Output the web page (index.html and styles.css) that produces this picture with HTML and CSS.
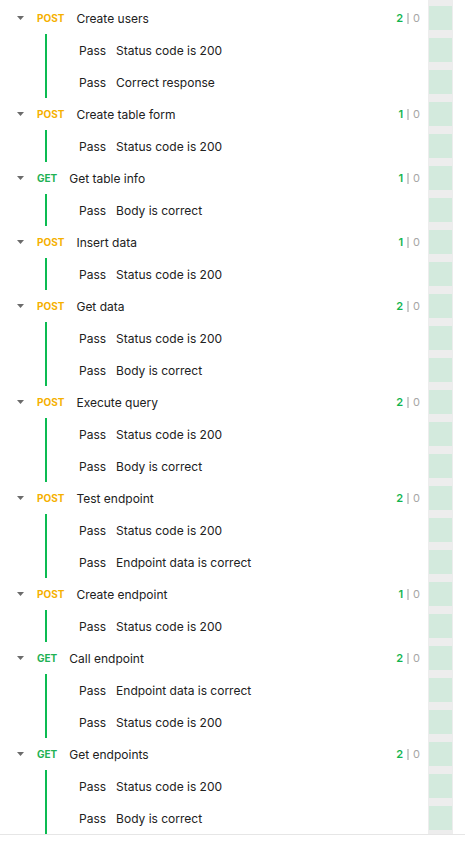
FILE: index.html
```html
<!DOCTYPE html>
<html>
<head>
<meta charset="utf-8">
<link rel="stylesheet" href="styles.css">
</head>
<body>
<div class="wrap">
  <div class="list">
    <div class="group">
      <div class="head"><svg class="caret" width="7" height="4" viewBox="0 0 7 4"><path d="M0 0H7L3.5 4Z"/></svg><span class="m post">POST</span><span class="name">Create users</span><span class="cnt"><b>2</b><i></i><s>0</s></span></div>
      <div class="kids">
        <div class="t"><span class="p">Pass</span><span>Status code is 200</span></div>
        <div class="t"><span class="p">Pass</span><span>Correct response</span></div>
      </div>
    </div>
    <div class="group">
      <div class="head"><svg class="caret" width="7" height="4" viewBox="0 0 7 4"><path d="M0 0H7L3.5 4Z"/></svg><span class="m post">POST</span><span class="name">Create table form</span><span class="cnt"><b>1</b><i></i><s>0</s></span></div>
      <div class="kids">
        <div class="t"><span class="p">Pass</span><span>Status code is 200</span></div>
      </div>
    </div>
    <div class="group">
      <div class="head"><svg class="caret" width="7" height="4" viewBox="0 0 7 4"><path d="M0 0H7L3.5 4Z"/></svg><span class="m get">GET</span><span class="name">Get table info</span><span class="cnt"><b>1</b><i></i><s>0</s></span></div>
      <div class="kids">
        <div class="t"><span class="p">Pass</span><span>Body is correct</span></div>
      </div>
    </div>
    <div class="group">
      <div class="head"><svg class="caret" width="7" height="4" viewBox="0 0 7 4"><path d="M0 0H7L3.5 4Z"/></svg><span class="m post">POST</span><span class="name">Insert data</span><span class="cnt"><b>1</b><i></i><s>0</s></span></div>
      <div class="kids">
        <div class="t"><span class="p">Pass</span><span>Status code is 200</span></div>
      </div>
    </div>
    <div class="group">
      <div class="head"><svg class="caret" width="7" height="4" viewBox="0 0 7 4"><path d="M0 0H7L3.5 4Z"/></svg><span class="m post">POST</span><span class="name">Get data</span><span class="cnt"><b>2</b><i></i><s>0</s></span></div>
      <div class="kids">
        <div class="t"><span class="p">Pass</span><span>Status code is 200</span></div>
        <div class="t"><span class="p">Pass</span><span>Body is correct</span></div>
      </div>
    </div>
    <div class="group">
      <div class="head"><svg class="caret" width="7" height="4" viewBox="0 0 7 4"><path d="M0 0H7L3.5 4Z"/></svg><span class="m post">POST</span><span class="name">Execute query</span><span class="cnt"><b>2</b><i></i><s>0</s></span></div>
      <div class="kids">
        <div class="t"><span class="p">Pass</span><span>Status code is 200</span></div>
        <div class="t"><span class="p">Pass</span><span>Body is correct</span></div>
      </div>
    </div>
    <div class="group">
      <div class="head"><svg class="caret" width="7" height="4" viewBox="0 0 7 4"><path d="M0 0H7L3.5 4Z"/></svg><span class="m post">POST</span><span class="name">Test endpoint</span><span class="cnt"><b>2</b><i></i><s>0</s></span></div>
      <div class="kids">
        <div class="t"><span class="p">Pass</span><span>Status code is 200</span></div>
        <div class="t"><span class="p">Pass</span><span>Endpoint data is correct</span></div>
      </div>
    </div>
    <div class="group">
      <div class="head"><svg class="caret" width="7" height="4" viewBox="0 0 7 4"><path d="M0 0H7L3.5 4Z"/></svg><span class="m post">POST</span><span class="name">Create endpoint</span><span class="cnt"><b>1</b><i></i><s>0</s></span></div>
      <div class="kids">
        <div class="t"><span class="p">Pass</span><span>Status code is 200</span></div>
      </div>
    </div>
    <div class="group">
      <div class="head"><svg class="caret" width="7" height="4" viewBox="0 0 7 4"><path d="M0 0H7L3.5 4Z"/></svg><span class="m get">GET</span><span class="name">Call endpoint</span><span class="cnt"><b>2</b><i></i><s>0</s></span></div>
      <div class="kids">
        <div class="t"><span class="p">Pass</span><span>Endpoint data is correct</span></div>
        <div class="t"><span class="p">Pass</span><span>Status code is 200</span></div>
      </div>
    </div>
    <div class="group">
      <div class="head"><svg class="caret" width="7" height="4" viewBox="0 0 7 4"><path d="M0 0H7L3.5 4Z"/></svg><span class="m get">GET</span><span class="name">Get endpoints</span><span class="cnt"><b>2</b><i></i><s>0</s></span></div>
      <div class="kids">
        <div class="t"><span class="p">Pass</span><span>Status code is 200</span></div>
        <div class="t"><span class="p">Pass</span><span>Body is correct</span></div>
      </div>
    </div>
  </div>
  <div class="bar">
    <div class="c"></div><div class="c"></div><div class="c"></div><div class="c"></div><div class="c"></div>
    <div class="c"></div><div class="c"></div><div class="c"></div><div class="c"></div><div class="c"></div>
    <div class="c"></div><div class="c"></div><div class="c"></div><div class="c"></div><div class="c"></div>
    <div class="c"></div><div class="c"></div><div class="c"></div><div class="c"></div><div class="c"></div>
    <div class="c"></div><div class="c"></div><div class="c"></div><div class="c"></div><div class="c"></div>
    <div class="c"></div>
  </div>
</div>
</body>
</html>
```
FILE: styles.css
```css
html, body {
  margin: 0;
  padding: 0;
  background: #fff;
}
body {
  font-family: Inter, "Noto Sans", sans-serif;
  font-size: 12px;
  color: #212121;
}
.wrap {
  display: flex;
  border-bottom: 1px solid #e6e6e6;
}
.list {
  width: 428px;
  padding-top: 2px;
}
.head {
  height: 32px;
  display: flex;
  align-items: center;
  padding-left: 17px;
  padding-right: 8px;
}
.caret {
  fill: #6b6b6b;
  margin-right: 13px;
  flex: none;
}
.m {
  font-size: 10px;
  font-weight: 700;
  margin-right: 12px;
}
.post { color: #f5b000; }
.get { color: #1fb254; }
.name { flex: 1; }
.cnt {
  display: flex;
  align-items: center;
  font-size: 11px;
}
.cnt b {
  color: #12b54e;
  font-weight: 600;
}
.cnt i {
  display: block;
  width: 2px;
  height: 11px;
  background: #cdcdcd;
  margin: 0 4px 0 4px;
}
.cnt s {
  text-decoration: none;
  color: #a6a6a6;
}
.kids {
  margin-left: 45px;
  border-left: 2px solid #0cbb52;
  padding-left: 32px;
}
.t {
  height: 32px;
  display: flex;
  align-items: center;
}
.p { margin-right: 10px; }
.bar {
  width: 25px;
  background: #ededed;
  padding-top: 2px;
  display: flex;
  flex-direction: column;
}
.c {
  height: 24px;
  margin: 4px 1px;
  background: #d3eadd;
}
```
